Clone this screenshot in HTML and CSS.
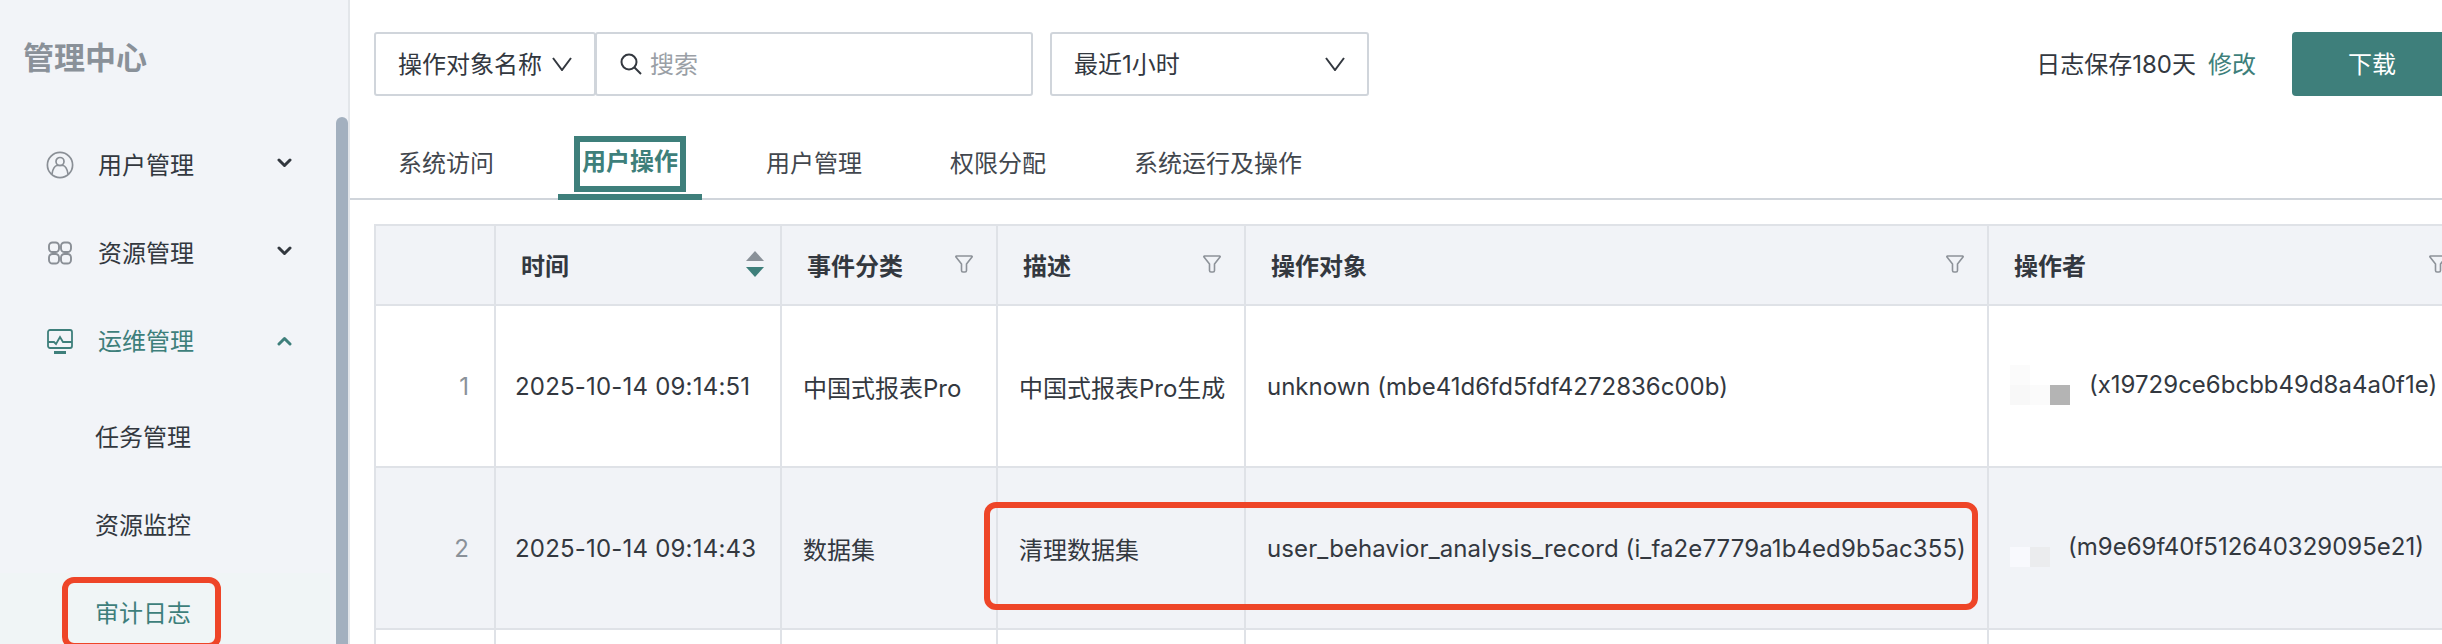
FILE: index.html
```html
<!DOCTYPE html>
<html lang="zh-CN">
  <head>
    <meta charset="UTF-8" />
    <meta name="viewport" content="width=device-width, initial-scale=1.0" />
    <title>审计日志</title>
    <link rel="stylesheet" href="styles.css">
  </head>
  <body>
    <svg class="sprite" width="0" height="0">
      <symbol id="arrow-down" viewBox="0 0 15 10">
        <path d="M2 2l5.500 5.500L13 2" fill="none" stroke="currentColor" stroke-width="3" stroke-linecap="round" stroke-linejoin="round" />
      </symbol>
      <symbol id="select-arrow" viewBox="0 0 20 14">
        <path d="M1 1l9 12 9-12" fill="none" stroke="currentColor" stroke-width="2" />
      </symbol>
      <symbol id="filter" viewBox="0 0 18 18">
        <path d="M1.500 1h15a.6.6 0 0 1 .5 1l-5.500 7v6.500a1.500 1.500 0 0 1-1.500 1.500H8a1.500 1.500 0 0 1-1.500-1.500V9L1 2a.6.6 0 0 1 .5-1z" fill="none" stroke="currentColor" stroke-width="1.600" stroke-linejoin="round" />
      </symbol>
    </svg>

    <aside class="sidebar">
      <h2 class="sidebar-title">管理中心</h2>
      <div class="scrollbar"></div>
      <ul class="menu">
        <li class="menu-item">
          <svg class="menu-icon" width="28" height="28" viewBox="0 0 28 28" fill="none" stroke="currentColor" stroke-width="1.700">
            <circle cx="14" cy="14" r="12.600" />
            <circle cx="14" cy="10.500" r="4" />
            <path d="M6 23c.6-5 3-8.500 5-8.500h6c2 0 4.400 3.500 5 8.500" />
          </svg>
          <span class="menu-label">用户管理</span>
          <svg class="menu-arrow" width="15" height="10"><use href="#arrow-down" /></svg>
        </li>
        <li class="menu-item">
          <svg class="menu-icon" width="28" height="28" viewBox="0 0 28 28" fill="none" stroke="currentColor" stroke-width="1.900">
            <rect x="3" y="3.500" width="10" height="9.500" rx="3.500" />
            <rect x="15" y="3.500" width="10" height="9.500" rx="3.500" />
            <rect x="3" y="15" width="10" height="9.500" rx="3.500" />
            <rect x="15" y="15" width="10" height="9.500" rx="3.500" />
          </svg>
          <span class="menu-label">资源管理</span>
          <svg class="menu-arrow" width="15" height="10"><use href="#arrow-down" /></svg>
        </li>
        <li class="menu-item active">
          <svg class="menu-icon" width="28" height="28" viewBox="0 0 28 28" fill="none" stroke="currentColor" stroke-width="1.800">
            <rect x="2" y="3" width="24" height="18" rx="2" />
            <path d="M2 15h6l2 2 4-7 3 5h9" />
            <path d="M8 25.500h12" stroke-width="3" />
          </svg>
          <span class="menu-label">运维管理</span>
          <svg class="menu-arrow up" width="15" height="10"><use href="#arrow-down" /></svg>
        </li>
      </ul>
      <ul class="submenu">
        <li class="submenu-item">任务管理</li>
        <li class="submenu-item">资源监控</li>
        <li class="submenu-item active">审计日志</li>
      </ul>
      <div class="mark mark-menu"></div>
    </aside>

    <main class="content">
      <div class="toolbar">
        <div class="select select-type">
          <span>操作对象名称</span>
          <svg width="20" height="14"><use href="#select-arrow" /></svg>
        </div>
        <div class="search">
          <svg width="22" height="22" viewBox="0 0 22 22" fill="none" stroke="currentColor" stroke-width="2">
            <circle cx="9" cy="9" r="7.500" />
            <path d="M14.500 14.500 21 21" />
          </svg>
          <span class="placeholder">搜索</span>
        </div>
        <div class="select select-time">
          <span>最近1小时</span>
          <svg width="20" height="14"><use href="#select-arrow" /></svg>
        </div>
        <div class="log-info">日志保存180天<a class="link">修改</a></div>
        <button class="download">下载</button>
      </div>

      <div class="tabs">
        <div class="tab">系统访问</div>
        <div class="tab active"><span>用户操作</span></div>
        <div class="tab">用户管理</div>
        <div class="tab">权限分配</div>
        <div class="tab">系统运行及操作</div>
      </div>

      <table class="log-table">
        <colgroup>
          <col class="col-index" />
          <col class="col-time" />
          <col class="col-type" />
          <col class="col-desc" />
          <col class="col-target" />
          <col class="col-user" />
        </colgroup>
        <thead>
          <tr>
            <th></th>
            <th>
              <div class="th-inner">
                时间
                <span class="sort"><i class="sort-up"></i><i class="sort-down"></i></span>
              </div>
            </th>
            <th><div class="th-inner">事件分类<svg class="filter" width="18" height="18"><use href="#filter" /></svg></div></th>
            <th><div class="th-inner">描述<svg class="filter" width="18" height="18"><use href="#filter" /></svg></div></th>
            <th><div class="th-inner">操作对象<svg class="filter" width="18" height="18"><use href="#filter" /></svg></div></th>
            <th><div class="th-inner">操作者<svg class="filter" width="18" height="18"><use href="#filter" /></svg></div></th>
          </tr>
        </thead>
        <tbody>
          <tr>
            <td class="index">1</td>
            <td class="time">2025-10-14 09:14:51</td>
            <td>中国式报表Pro</td>
            <td>中国式报表Pro生成</td>
            <td>unknown (mbe41d6fd5fdf4272836c00b)</td>
            <td>
              <span class="blur blur-a"><i class="b1"></i><i></i><i></i><i class="b2"></i><i class="b1"></i><i class="b3"></i></span>(x19729ce6bcbb49d8a4a0f1e)
            </td>
          </tr>
          <tr class="even">
            <td class="index">2</td>
            <td class="time">2025-10-14 09:14:43</td>
            <td>数据集</td>
            <td>清理数据集</td>
            <td class="long-name">user_behavior_analysis_record (i_fa2e7779a1b4ed9b5ac355)</td>
            <td>
              <span class="blur blur-b"><i></i><i></i><i></i><i class="b4"></i><i class="b5"></i><i></i></span>(m9e69f40f512640329095e21)
            </td>
          </tr>
          <tr>
            <td></td>
            <td></td>
            <td></td>
            <td></td>
            <td></td>
            <td></td>
          </tr>
        </tbody>
      </table>
      <div class="mark mark-row"></div>
    </main>
  </body>
</html>
```

FILE: styles.css
```css
* {
  box-sizing: border-box;
}
html,
body {
  height: 100%;
}
body {
  font-family: Inter, "Noto Sans CJK SC", sans-serif;
  font-size: 24px;
  color: #33383f;
  display: flex;
  height: 644px;
  margin: 0;
  overflow: hidden;
  background-color: #ffffff;
}
ul {
  list-style: none;
  margin: 0;
  padding: 0;
}
.sprite {
  display: block;
  position: absolute;
}

/* sidebar */
.sidebar {
  position: relative;
  flex: 0 0 350px;
  border-right: 2px solid #e3e6ea;
  background-color: #f2f4f8;
  overflow: hidden;
}
.sidebar-title {
  height: 121px;
  margin: 0;
  padding: 37px 0 0 23px;
  font-size: 31px;
  line-height: 42px;
  font-weight: 700;
  color: #8a9199;
}
.scrollbar {
  position: absolute;
  top: 117px;
  right: 0;
  width: 12px;
  height: 560px;
  border-radius: 6px;
  background-color: #a3b0bf;
}
.menu-item {
  display: flex;
  align-items: center;
  height: 88px;
  padding-left: 46px;
}
.menu-icon {
  flex: none;
  color: #8a8f96;
}
.menu-label {
  width: 179px;
  margin-left: 24px;
  padding-bottom: 3px;
}
.menu-arrow {
  flex: none;
  margin-bottom: 4px;
  color: #33383f;
}
.menu-arrow.up {
  margin-bottom: 0;
  transform: rotate(180deg);
}
.menu-item.active,
.menu-item.active .menu-icon,
.menu-item.active .menu-arrow {
  color: #3e7f7b;
}
.submenu {
  margin-top: 12px;
}
.submenu-item {
  display: flex;
  align-items: center;
  width: 330px;
  height: 80px;
  margin-bottom: 8px;
  padding: 0 0 3px 95px;
}
.submenu-item.active {
  color: #3e7f7b;
  background-color: #f0f5f6;
}

/* annotation boxes */
.mark {
  position: absolute;
  border: 6px solid #ee4528;
  border-radius: 12px;
}
.mark-menu {
  top: 577px;
  left: 62px;
  width: 159px;
  height: 72px;
}
.mark-row {
  top: 502px;
  left: 634px;
  width: 994px;
  height: 108px;
}

/* toolbar */
.content {
  position: relative;
  flex: 1;
  min-width: 0;
  overflow: hidden;
}
.toolbar {
  display: flex;
  align-items: center;
  width: 2078px;
  height: 64px;
  margin: 32px 0 0 24px;
}
.select,
.search {
  display: flex;
  align-items: center;
  height: 64px;
  border: 2px solid #d0d5db;
  border-radius: 3px;
}
.select {
  justify-content: space-between;
  padding: 0 22px 0 22px;
}
.select span,
.placeholder,
.log-info {
  padding-bottom: 3px;
}
.select-type {
  width: 222px;
}
.search {
  width: 438px;
  margin-left: -1px;
  padding-left: 23px;
}
.search svg {
  flex: none;
}
.placeholder {
  margin-left: 8px;
  color: #9aa0a6;
}
.select-time {
  width: 319px;
  margin-left: 17px;
}
.log-info {
  margin-left: auto;
  white-space: nowrap;
}
.link {
  margin-left: 12px;
  color: #3e7f7b;
}
.download {
  flex: none;
  width: 160px;
  height: 64px;
  margin-left: 36px;
  padding: 0 0 3px;
  border: 0;
  border-radius: 4px;
  font: inherit;
  color: #ffffff;
  background-color: #3e7f7b;
}

/* tabs */
.tabs {
  display: flex;
  gap: 40px;
  height: 64px;
  margin-top: 40px;
  padding-left: 24px;
  border-bottom: 2px solid #d0d5db;
}
.tab {
  display: flex;
  align-items: center;
  height: 64px;
  padding: 0 24px 13px;
  color: #42474e;
}
.tab.active {
  padding-bottom: 7px;
  font-weight: 700;
  color: #3e7f7b;
  border-bottom: 6px solid #3e7f7b;
}
.tab.active span {
  margin-top: 5px;
  padding-bottom: 5px;
  line-height: 35px;
  outline: 6px solid #3e7f7b;
  outline-offset: 2px;
}

/* table */
.log-table {
  table-layout: fixed;
  width: 2098px;
  margin: 24px 0 0 24px;
  border-spacing: 0;
  border-collapse: separate;
  border-top: 2px solid #dfe2e7;
}
.col-index {
  width: 122px;
}
.col-time {
  width: 286px;
}
.col-type {
  width: 216px;
}
.col-desc {
  width: 248px;
}
.col-target {
  width: 743px;
}
.col-user {
  width: 483px;
}
.log-table th,
.log-table td {
  border-right: 2px solid #dfe2e7;
  border-bottom: 2px solid #dfe2e7;
}
.log-table th:first-child,
.log-table td:first-child {
  border-left: 2px solid #dfe2e7;
}
.log-table th {
  height: 80px;
  padding: 0 23px 2px 25px;
  font-weight: 700;
  text-align: left;
  background-color: #f1f3f7;
}
.log-table td {
  height: 162px;
  padding: 0 0 0 21px;
  white-space: nowrap;
  overflow: hidden;
}
.log-table .even td {
  background-color: #f1f3f7;
}
.log-table td.index {
  padding: 0 25px 0 0;
  text-align: right;
  color: #8a9199;
}
.log-table td.time {
  padding-left: 19px;
  letter-spacing: 0.2px;
}
.log-table td.long-name {
  letter-spacing: 0.1px;
}
.th-inner {
  display: flex;
  align-items: center;
  justify-content: space-between;
}
.filter {
  flex: none;
  color: #8d9299;
}
.sort {
  display: flex;
  flex-direction: column;
  gap: 6px;
  margin-right: -7px;
}
.sort i {
  display: block;
  width: 0;
  height: 0;
  border-left: 9px solid transparent;
  border-right: 9px solid transparent;
}
.sort-up {
  border-bottom: 10px solid #8a9199;
}
.sort-down {
  border-top: 10px solid #3e7f7b;
}

/* blurred user names */
.blur {
  display: inline-grid;
  grid-template-columns: repeat(3, 20px);
  grid-template-rows: repeat(2, 20px);
  margin-bottom: 3px;
  vertical-align: middle;
}
.blur-a {
  margin-right: 19px;
}
.blur-b {
  margin-right: -2px;
}
.b1 {
  background-color: #fbfbfb;
}
.b2 {
  background-color: #f8f8f8;
}
.b3 {
  background-color: #b4b4b4;
}
.b4 {
  background-color: #f8f9fd;
}
.b5 {
  background-color: #ebecee;
}
```
